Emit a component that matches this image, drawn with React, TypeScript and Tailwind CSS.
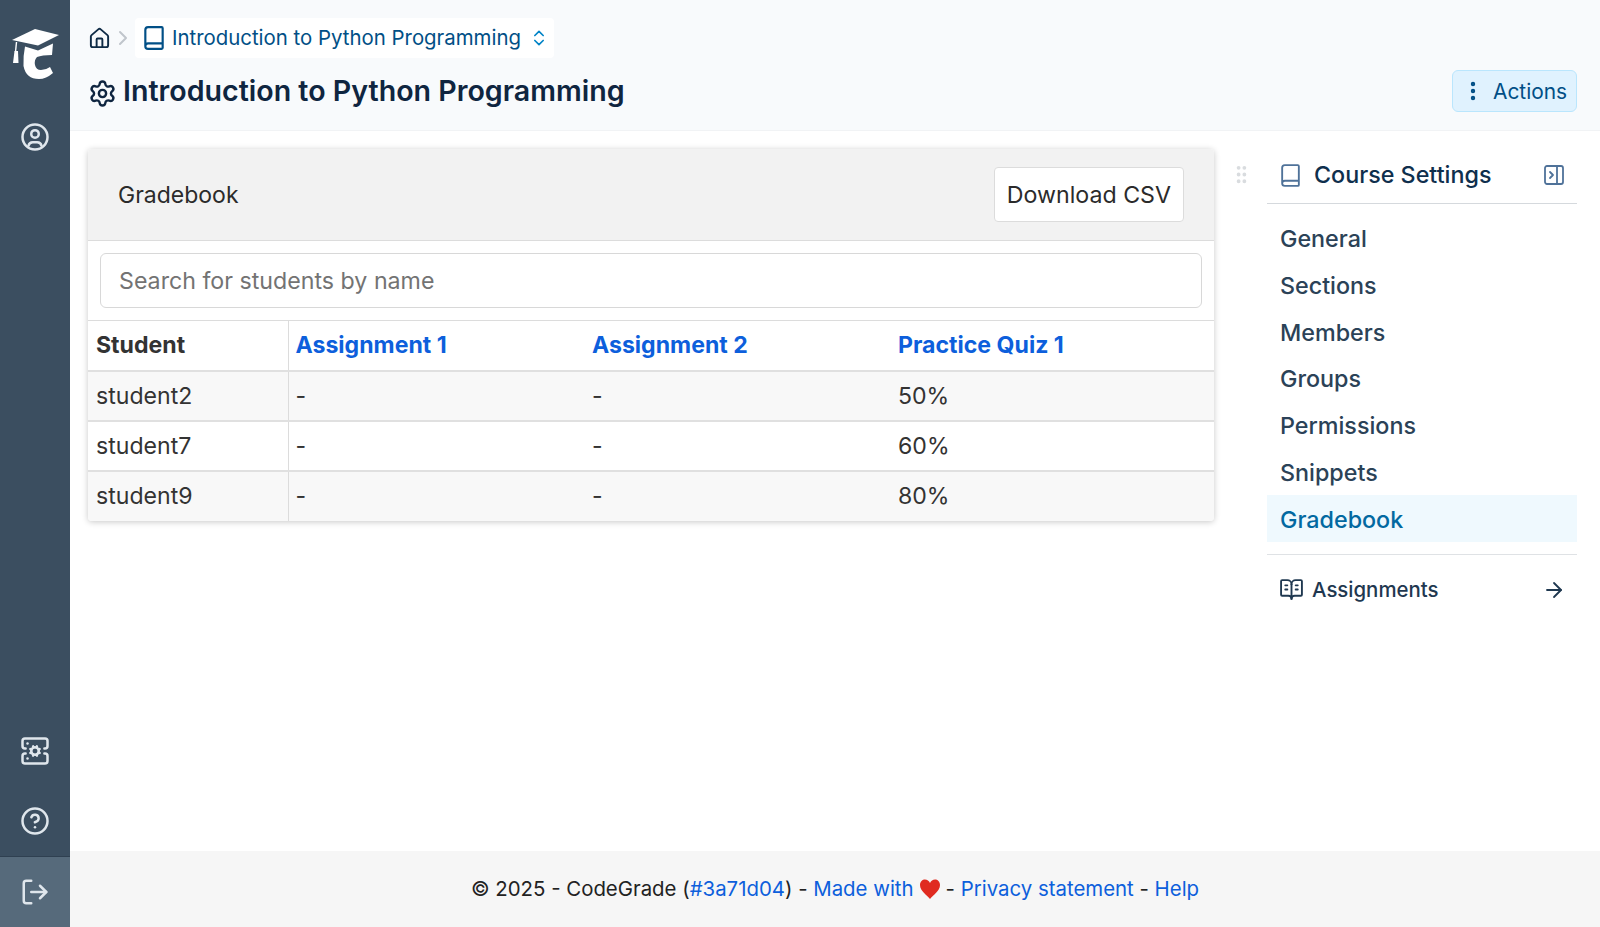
import * as React from "react";
import {
  ArrowRight,
  Book,
  BookOpenText,
  ChevronRight,
  ChevronsUpDown,
  CircleHelp,
  EllipsisVertical,
  GripVertical,
  House,
  LogOut,
  PanelRightClose,
  ServerCog,
  Settings,
} from "lucide-react";

const rows = [
  { name: "student2", a1: "-", a2: "-", quiz: "50%" },
  { name: "student7", a1: "-", a2: "-", quiz: "60%" },
  { name: "student9", a1: "-", a2: "-", quiz: "80%" },
];

const navItems = ["General", "Sections", "Members", "Groups", "Permissions", "Snippets", "Gradebook"];

function Logo() {
  return (
    <svg width="48" height="52" viewBox="0 0 48 52" fill="white">
      <path d="M0 12 L23 1 L47 7 L26 17.5 Z" />
      <path d="M13 18.5 L26 22.5 L41 15.5 L40 27 Q30 27 25 29 Q22 32 23 37 Q24 42 29 42 Q34 42 38 39 L41 45 Q34 51 27 51 Q14 51 11.5 38 Q11 28 13 18.5 Z" />
      <path d="M4.5 14 L3.5 24" stroke="white" strokeWidth="1.4" fill="none" />
      <path d="M2.5 23 L6 23 L6.5 35 L1 35 Z" />
    </svg>
  );
}

function UserIcon() {
  return (
    <svg width="30" height="30" viewBox="0 0 24 24" fill="none" stroke="currentColor" strokeWidth="2" strokeLinecap="round" strokeLinejoin="round">
      <circle cx="12" cy="12" r="10" />
      <circle cx="12" cy="9.5" r="3" />
      <path d="M6.8 19 a3.5 3.5 0 0 1 3.4 -2.8 h3.6 a3.5 3.5 0 0 1 3.4 2.8" />
    </svg>
  );
}

function Heart() {
  return (
    <svg width="24" height="24" viewBox="0 0 24 24" className="block">
      <path
        d="M12 22 C9 18 2 14 2 8 C2 4.5 4.5 2.5 7 2.5 C9.2 2.5 11 3.8 12 6 C13 3.8 14.8 2.5 17 2.5 C19.5 2.5 22 4.5 22 8 C22 14 15 18 12 22 Z"
        fill="#e02b20"
      />
    </svg>
  );
}

function Sidebar() {
  return (
    <aside className="w-[70px] shrink-0 bg-[#3b4e60] flex flex-col items-center text-[#dfe6ec]">
      <div className="mt-[28px] w-full pl-[12px]">
        <Logo />
      </div>
      <div className="mt-[42px]">
        <UserIcon />
      </div>
      <div className="flex-1" />
      <ServerCog size={30} strokeWidth={2} className="mb-[40px]" />
      <CircleHelp size={30} strokeWidth={2} className="mb-[20px]" />
      <div className="w-full h-[71px] bg-[#566a7b] border-t border-[#2f4051] flex items-center justify-center">
        <LogOut size={30} strokeWidth={2} />
      </div>
    </aside>
  );
}

function Header() {
  return (
    <header className="h-[131px] shrink-0 bg-[#f8fafc] border-b border-[#f1f3f5] pl-[18px] pr-[23px] pt-[18px] flex flex-col">
      <div className="flex items-center h-[40px]">
        <House size={23} strokeWidth={2} className="text-[#0f2b46]" />
        <ChevronRight size={24} strokeWidth={2} className="text-[#c0c5cb]" />
        <div className="h-[40px] bg-white rounded flex items-center pl-[6px] pr-[5px] text-[#014f86]">
          <Book size={26} strokeWidth={2} />
          <span className="ml-[5px] text-[20.4px]">Introduction to Python Programming</span>
          <ChevronsUpDown size={20} strokeWidth={2} className="ml-[8px] text-[#0284c7]" />
        </div>
      </div>
      <div className="flex items-center justify-between mt-[12px]">
        <h1 className="flex items-center text-[#0f2540] text-[28.6px] font-semibold">
          <Settings size={29} strokeWidth={2} className="mr-[6px] mt-[4px]" />
          Introduction to Python Programming
        </h1>
        <button className="h-[42px] w-[125px] bg-[#e0f2fe] border border-[#bae6fd] rounded-md flex items-center pl-[8px] text-[#014f86] text-[20.9px]">
          <EllipsisVertical size={24} strokeWidth={2.4} />
          <span className="ml-[8px]">Actions</span>
        </button>
      </div>
    </header>
  );
}

function GradebookCard() {
  return (
    <section className="w-[1126px] h-[372px] shrink-0 bg-white rounded shadow-[0_1px_6px_rgba(0,0,0,0.22)] overflow-hidden">
      <div className="h-[92px] bg-[#f2f2f2] border-b border-[#dcdcdc] flex items-center justify-between pl-[30px] pr-[30px]">
        <span className="text-[#2b2b2b] text-[23px] pt-[2px]">Gradebook</span>
        <button className="h-[55px] pl-[12px] pr-[12px] pt-[1px] bg-white border border-[#dcdcdc] rounded text-[#2b2b2b] text-[23.2px]">
          Download CSV
        </button>
      </div>
      <div className="h-[79px] px-[12px] pt-[12px]">
        <div className="h-[55px] border border-[#d8d8d8] rounded-md flex items-center pl-[18px] pt-[1px] text-[#737373] text-[23.2px]">
          Search for students by name
        </div>
      </div>
      <table className="w-full table-fixed border-collapse text-[23.1px] text-[#333]">
        <colgroup>
          <col className="w-[200px]" />
          <col className="w-[297px]" />
          <col className="w-[305px]" />
          <col />
        </colgroup>
        <thead>
          <tr className="h-[50px] border-t border-[#dcdcdc]">
            <th className="px-[8px] pt-[1px] text-left font-bold border-r border-[#dcdcdc]">Student</th>
            <th className="pl-[7px] pt-[1px] text-left font-bold text-[#0d5fdc]">Assignment 1</th>
            <th className="pl-[7px] pt-[1px] text-left font-bold text-[#0d5fdc]">Assignment 2</th>
            <th className="pl-[8px] pt-[1px] text-left font-bold text-[#0d5fdc]">Practice Quiz 1</th>
          </tr>
        </thead>
        <tbody>
          {rows.map((r, i) => (
            <tr key={r.name} className={`h-[50px] border-t-2 border-[#e0e0e0] ${i % 2 === 0 ? "bg-[#f8f8f8]" : "bg-white"}`}>
              <td className="px-[8px] pt-[1px] border-r border-[#dcdcdc]">{r.name}</td>
              <td className="pl-[7px] pt-[1px]">{r.a1}</td>
              <td className="pl-[7px] pt-[1px]">{r.a2}</td>
              <td className="pl-[8px] pt-[1px]">{r.quiz}</td>
            </tr>
          ))}
        </tbody>
      </table>
    </section>
  );
}

function CourseSettings() {
  return (
    <aside className="w-[310px] shrink-0 ml-[53px] text-[#0f2f4d]">
      <div className="h-[55px] border-b border-[#d5d9dd] flex items-center pl-[11px] pr-[11px]">
        <Book size={25} strokeWidth={1.8} className="text-[#4f7299] mb-[1px]" />
        <span className="ml-[11px] text-[23.3px] font-medium flex-1 mb-[2px]">Course Settings</span>
        <PanelRightClose size={24} strokeWidth={1.8} className="text-[#4f7299] mb-[3px]" />
      </div>
      <nav className="mt-[11px] flex flex-col">
        {navItems.map((item) => (
          <div
            key={item}
            className={`h-[46.7px] flex items-center pl-[13px] pt-[3px] text-[23.3px] font-medium ${
              item === "Gradebook" ? "bg-[#eff9fe] text-[#0369a1]" : "text-[#2b4257]"
            }`}
          >
            {item}
          </div>
        ))}
      </nav>
      <div className="mt-[12px] border-t border-[#dfe2e5] h-[71px] flex items-center pl-[12px] pr-[11px] text-[#1f3850]">
        <BookOpenText size={25} strokeWidth={1.8} />
        <span className="ml-[8px] text-[20.4px] font-medium flex-1">Assignments</span>
        <ArrowRight size={24} strokeWidth={1.8} />
      </div>
    </aside>
  );
}

export default function App() {
  return (
    <div className="h-[927px] w-[1600px] flex overflow-hidden bg-white font-['Inter',sans-serif]">
      <Sidebar />
      <main className="flex-1 flex flex-col min-w-0">
        <Header />
        <div className="flex-1 pl-[18px] pt-[18px] flex items-start relative">
          <GradebookCard />
          <GripVertical size={23} strokeWidth={2} className="absolute left-[1160px] top-[32px] text-[#d9dcdf]" />
          <CourseSettings />
        </div>
        <footer className="h-[76px] shrink-0 bg-[#f6f6f6] flex items-center justify-center text-[20.4px] text-[#222]">
          <span>© 2025 - CodeGrade (</span>
          <span className="text-[#0d5fdc]">#3a71d04</span>
          <span>) -&nbsp;</span>
          <span className="text-[#0d5fdc]">Made with</span>
          <span className="mx-[4px]"><Heart /></span>
          <span>-&nbsp;</span>
          <span className="text-[#0d5fdc]">Privacy statement</span>
          <span>&nbsp;-&nbsp;</span>
          <span className="text-[#0d5fdc]">Help</span>
        </footer>
      </main>
    </div>
  );
}
